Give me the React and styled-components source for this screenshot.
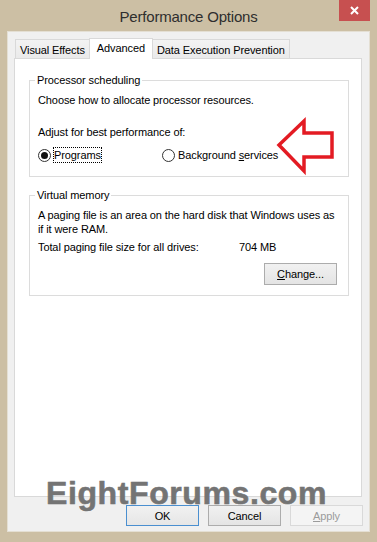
import React from "react";
import styled, { createGlobalStyle, css } from "styled-components";

const Global = createGlobalStyle`
  html, body { margin: 0; padding: 0; background: #CBBEA3; }
  body { width: 377px; height: 542px; overflow: hidden; }
  * { box-sizing: border-box; }
`;

const Window = styled.div`
  position: relative;
  width: 377px;
  height: 542px;
  background: #CCBFA4;
  padding: 0 7px 10px;
  display: flex;
  flex-direction: column;
  font-family: "Liberation Sans", Arial, sans-serif;
  font-size: 11px;
  letter-spacing: -0.1px;
  color: #000;
`;

const TitleBar = styled.div`
  height: 31px;
  flex: none;
  display: grid;
  grid-template-columns: 1fr auto 1fr;
  align-items: center;
`;

const Title = styled.div`
  grid-column: 2;
  font-size: 15px;
  letter-spacing: -0.2px;
  color: #2E2E2E;
  padding-top: 1px;
`;

const CloseButton = styled.div`
  grid-column: 3;
  justify-self: end;
  align-self: start;
  width: 31px;
  height: 21px;
  background: #C75050;
  display: flex;
  align-items: center;
  justify-content: center;
`;

const Client = styled.div`
  flex: 1;
  border: 1px solid #E4DFD3;
  background: #F0F0F0;
  padding: 6px 6px 5px 6px;
  display: flex;
  flex-direction: column;
`;

const TabRow = styled.div`
  display: flex;
  align-items: flex-end;
  padding-left: 1px;
  height: 20px;
`;

const Tab = styled.div`
  display: flex;
  align-items: center;
  border: 1px solid #D9D9D9;
  border-bottom: none;
  white-space: nowrap;
  & + & { margin-left: -1px; }
  ${(p) =>
    p.$active
      ? css`
          position: relative;
          z-index: 1;
          height: 21px;
          margin-bottom: -1px;
          background: #fff;
          padding: 0 7px 2px;
        `
      : css`
          height: 19px;
          background: linear-gradient(#F3F3F3, #EAEAEA);
          padding: 2px 4px 0;
        `}
`;

const Panel = styled.div`
  height: 439px;
  flex: none;
  margin-right: 1px;
  border: 1px solid #D9D9D9;
  background: #fff;
  padding: 14px 12px 0 14px;
`;

const Group = styled.fieldset`
  margin: ${(p) => p.$mt || 0}px 0 0 0;
  min-width: 0;
  border: 1px solid #DCDCDC;
  padding: 6px 11px ${(p) => p.$pb}px 8px;
`;

const Legend = styled.legend`
  padding: 0 2px;
  margin-left: -3px;
  line-height: 14px;
`;

const Text = styled.p`
  margin: ${(p) => p.$mt || 0}px 0 0 0;
  line-height: 14px;
`;

const RadioRow = styled.div`
  margin-top: 8px;
  height: 16px;
  display: grid;
  grid-template-columns: 124px auto;
  align-items: center;
`;

const RadioLabel = styled.label`
  display: flex;
  align-items: center;
  gap: 2px;
`;

const RadioCircle = styled.span`
  width: 13px;
  height: 13px;
  border-radius: 50%;
  border: 1px solid #333;
  background: #fff;
  display: flex;
  align-items: center;
  justify-content: center;
  &::after {
    content: "";
    display: ${(p) => (p.$checked ? "block" : "none")};
    width: 7px;
    height: 7px;
    border-radius: 50%;
    background: #111;
  }
`;

const RadioText = styled.span`
  line-height: 14px;
  border: 1px ${(p) => (p.$focused ? "dotted #000" : "solid transparent")};
`;

const U = styled.span`
  text-decoration: underline;
`;

const InfoRow = styled.div`
  margin-top: 4px;
  display: grid;
  grid-template-columns: 201px auto;
  line-height: 14px;
`;

const GroupButtons = styled.div`
  margin-top: 9px;
  display: flex;
  justify-content: flex-end;
`;

const Button = styled.button`
  width: 73px;
  height: ${(p) => p.$h || 21}px;
  padding: 0;
  font: inherit;
  letter-spacing: inherit;
  color: #000;
  border: 1px solid #ACACAC;
  background: linear-gradient(#F1F1F1, #E4E4E4);
  ${(p) =>
    p.$default &&
    css`
      border-color: #4A8FD0;
      background: linear-gradient(#F1F1F1, #E6E6E6);
    `}
  ${(p) =>
    p.$disabled &&
    css`
      color: #9B9B9B;
      border-color: #D9D9D9;
      background: #F4F4F4;
    `}
`;

const DialogButtons = styled.div`
  margin-top: 8px;
  display: flex;
  justify-content: flex-end;
  gap: 9px;
`;

const Arrow = styled.svg`
  position: absolute;
  left: 274px;
  top: 116px;
  width: 64px;
  height: 60px;
  overflow: visible;
`;

const Watermark = styled.div`
  position: absolute;
  left: 46px;
  top: 477px;
  font-family: "Liberation Sans", Arial, sans-serif;
  font-weight: bold;
  font-size: 32px;
  line-height: 32px;
  letter-spacing: 0.6px;
  color: #747474;
  -webkit-text-stroke: 0.6px #747474;
  white-space: nowrap;
  pointer-events: none;
`;

export default function App() {
  return (
    <>
      <Global />
      <Window>
        <TitleBar>
          <Title>Performance Options</Title>
          <CloseButton>
            <svg width="9" height="9" viewBox="0 0 9 9">
              <path d="M1 1L8 8M8 1L1 8" stroke="#fff" strokeWidth="2" />
            </svg>
          </CloseButton>
        </TitleBar>
        <Client>
          <TabRow>
            <Tab>Visual Effects</Tab>
            <Tab $active>Advanced</Tab>
            <Tab>Data Execution Prevention</Tab>
          </TabRow>
          <Panel>
            <Group $pb={13}>
              <Legend>Processor scheduling</Legend>
              <Text>Choose how to allocate processor resources.</Text>
              <Text $mt={18}>Adjust for best performance of:</Text>
              <RadioRow>
                <RadioLabel>
                  <RadioCircle $checked />
                  <RadioText $focused>Programs</RadioText>
                </RadioLabel>
                <RadioLabel>
                  <RadioCircle />
                  <RadioText>
                    Background <U>s</U>ervices
                  </RadioText>
                </RadioLabel>
              </RadioRow>
            </Group>
            <Group $mt={11} $pb={10}>
              <Legend>Virtual memory</Legend>
              <Text>
                A paging file is an area on the hard disk that Windows uses as
                <br />
                if it were RAM.
              </Text>
              <InfoRow>
                <span>Total paging file size for all drives:</span>
                <span>704 MB</span>
              </InfoRow>
              <GroupButtons>
                <Button $h={22}>
                  <U>C</U>hange...
                </Button>
              </GroupButtons>
            </Group>
          </Panel>
          <DialogButtons>
            <Button $default>OK</Button>
            <Button>Cancel</Button>
            <Button $disabled>
              <U>A</U>pply
            </Button>
          </DialogButtons>
        </Client>
        <Arrow viewBox="0 0 64 60">
          <polygon
            points="5,29 30,5 30,17 58,17 58,41 30,41 30,55"
            fill="none"
            stroke="#E31B23"
            strokeWidth="3.5"
            strokeLinejoin="miter"
          />
        </Arrow>
        <Watermark>EightForums.com</Watermark>
      </Window>
    </>
  );
}
